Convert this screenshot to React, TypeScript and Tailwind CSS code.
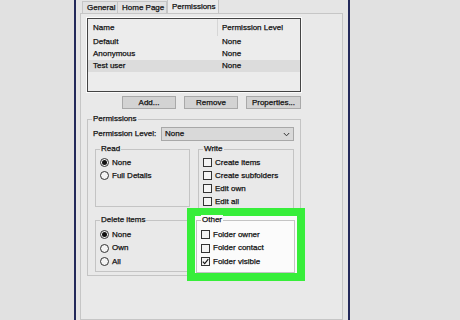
import React from 'react';

// Outlook folder properties dialog, "Permissions" tab, with the "Other" group highlighted.

const Radio = ({ label, checked }: { label: string; checked?: boolean }) => (
  <div className="flex h-[13px] items-center gap-[3px]">
    <span className="flex h-[9px] w-[9px] shrink-0 items-center justify-center rounded-full border border-[#333] bg-[#f4f4f4]">
      {checked && <span className="h-[5px] w-[5px] rounded-full bg-[#111]" />}
    </span>
    <span>{label}</span>
  </div>
);

const Check = ({ label, checked }: { label: string; checked?: boolean }) => (
  <div className="flex h-[13px] items-center gap-[3px]">
    <span className="flex h-[9px] w-[9px] shrink-0 items-center justify-center border border-[#333] bg-[#f4f4f4]">
      {checked && (
        <svg width="7" height="7" viewBox="0 0 7 7" fill="none">
          <path d="M0.8 3.6 L2.7 5.6 L6.3 1.2" stroke="#111" strokeWidth="1.1" />
        </svg>
      )}
    </span>
    <span>{label}</span>
  </div>
);

const Group = ({
  title,
  className,
  legendBg = 'bg-[#e9e9e9]',
  children,
}: {
  title: string;
  className: string;
  legendBg?: string;
  children?: React.ReactNode;
}) => (
  <div className={`flex shrink-0 flex-col border border-[#c4c4c4] ${className}`}>
    <span className={`-mt-[6px] ml-[4px] w-fit px-[1px] leading-[10px] ${legendBg}`}>{title}</span>
    {children}
  </div>
);

const Button = ({ label, w }: { label: string; w: string }) => (
  <div
    className={`flex h-[13px] shrink-0 items-center justify-center border border-[#a9a9a9] bg-[#d3d3d3] ${w}`}
  >
    {label}
  </div>
);

export default function App() {
  const rows = [
    ['Default', 'None'],
    ['Anonymous', 'None'],
    ['Test user', 'None'],
  ];

  return (
    <div
      className="flex h-[320px] w-[460px] overflow-hidden whitespace-nowrap bg-[#e1e1e1] text-[8px] leading-[10px] text-[#111] [-webkit-text-stroke:0.25px_#111]"
      style={{ fontFamily: '"Liberation Sans", Arial, sans-serif' }}
    >
      <div className="w-[74px] shrink-0" />

      {/* dialog window */}
      <div className="flex w-[276px] shrink-0 flex-col border-x-2 border-[#23295a] bg-[#e5e5e5] pl-[4px] pr-[5px]">
        {/* tabs */}
        <div className="flex h-[13px] items-end pl-[2px]">
          <div className="flex h-[12px] w-[36px] shrink-0 items-center border border-b-0 border-[#c6c6c6] bg-[#e2e2e2] pl-[4px]">
            General
          </div>
          <div className="flex h-[12px] w-[49px] shrink-0 items-center border border-b-0 border-l-0 border-[#c6c6c6] bg-[#e2e2e2] pl-[4px]">
            Home Page
          </div>
          <div className="-mb-px flex h-[15px] w-[52px] shrink-0 items-center border border-b-0 border-[#c6c6c6] bg-[#ebebeb] pl-[4px]">
            Permissions
          </div>
        </div>

        {/* tab panel */}
        <div className="flex flex-1 flex-col border border-[#c6c6c6] bg-[#e9e9e9] pl-[6px] pt-[4px]">
          {/* list */}
          <div className="flex h-[74px] w-[214px] shrink-0 flex-col border border-[#444] bg-[#ececec] shadow-[0_0_0_1px_#fbfbfb]">
            <div className="flex h-[17px] items-center">
              <div className="flex h-full w-[130px] items-center border-r border-[#d6d6d6] pl-[5px]">Name</div>
              <div className="pl-[4px]">Permission Level</div>
            </div>
            {rows.map(([n, p], i) => (
              <div
                key={n}
                className={`flex h-[12px] items-center ${i === 2 ? 'bg-[#dcdcdc]' : ''}`}
              >
                <div className="w-[130px] pl-[5px]">{n}</div>
                <div className="pl-[4px]">{p}</div>
              </div>
            ))}
          </div>

          {/* buttons */}
          <div className="mt-[4px] flex w-[214px] justify-end gap-[8px]">
            <Button label="Add..." w="w-[54px]" />
            <Button label="Remove" w="w-[54px]" />
            <Button label="Properties..." w="w-[55px]" />
          </div>

          {/* permissions group */}
          <Group title="Permissions" className="mt-[10px] h-[157px] w-[214px]">
            <div className="mt-[3px] flex items-center pl-[5px]">
              <span className="w-[68px] shrink-0">Permission Level:</span>
              <div className="flex h-[14px] w-[133px] shrink-0 items-center justify-between border border-[#a8a8a8] bg-[#d9d9d9] pl-[3px] pr-[3px]">
                <span>None</span>
                <svg width="7" height="5" viewBox="0 0 7 5" fill="none">
                  <path d="M0.8 1 L3.5 3.8 L6.2 1" stroke="#333" strokeWidth="1" />
                </svg>
              </div>
            </div>

            <div className="mt-[8px] flex gap-[8px] pl-[7px]">
              <Group title="Read" className="h-[58px] w-[95px]">
                <div className="mt-[2px] flex flex-col pl-[4px]">
                  <Radio label="None" checked />
                  <Radio label="Full Details" />
                </div>
              </Group>
              <Group title="Write" className="h-[62px] w-[96px]">
                <div className="mt-[2px] flex flex-col pl-[4px]">
                  <Check label="Create items" />
                  <Check label="Create subfolders" />
                  <Check label="Edit own" />
                  <Check label="Edit all" />
                </div>
              </Group>
            </div>

            <div className="-mt-[3px] flex pl-[7px]">
              <Group title="Delete items" className="mt-[12px] h-[52px] w-[95px]">
                <div className="mt-[3px] flex flex-col gap-[0.5px] pl-[4px]">
                  <Radio label="None" checked />
                  <Radio label="Own" />
                  <Radio label="All" />
                </div>
              </Group>
              {/* highlighted "Other" group */}
              <div className="-ml-[3px] h-[73px] w-[118px] shrink-0 border-[8px] border-[#37ee3a] bg-[#fbfbfb]">
                <Group title="Other" className="ml-[1px] mt-[4px] h-[53px] w-[99px]" legendBg="bg-[#fbfbfb]">
                  <div className="mt-[3px] flex flex-col gap-[0.5px] pl-[4px]">
                    <Check label="Folder owner" />
                    <Check label="Folder contact" />
                    <Check label="Folder visible" checked />
                  </div>
                </Group>
              </div>
            </div>
          </Group>
        </div>
      </div>

      <div className="flex-1" />
    </div>
  );
}
